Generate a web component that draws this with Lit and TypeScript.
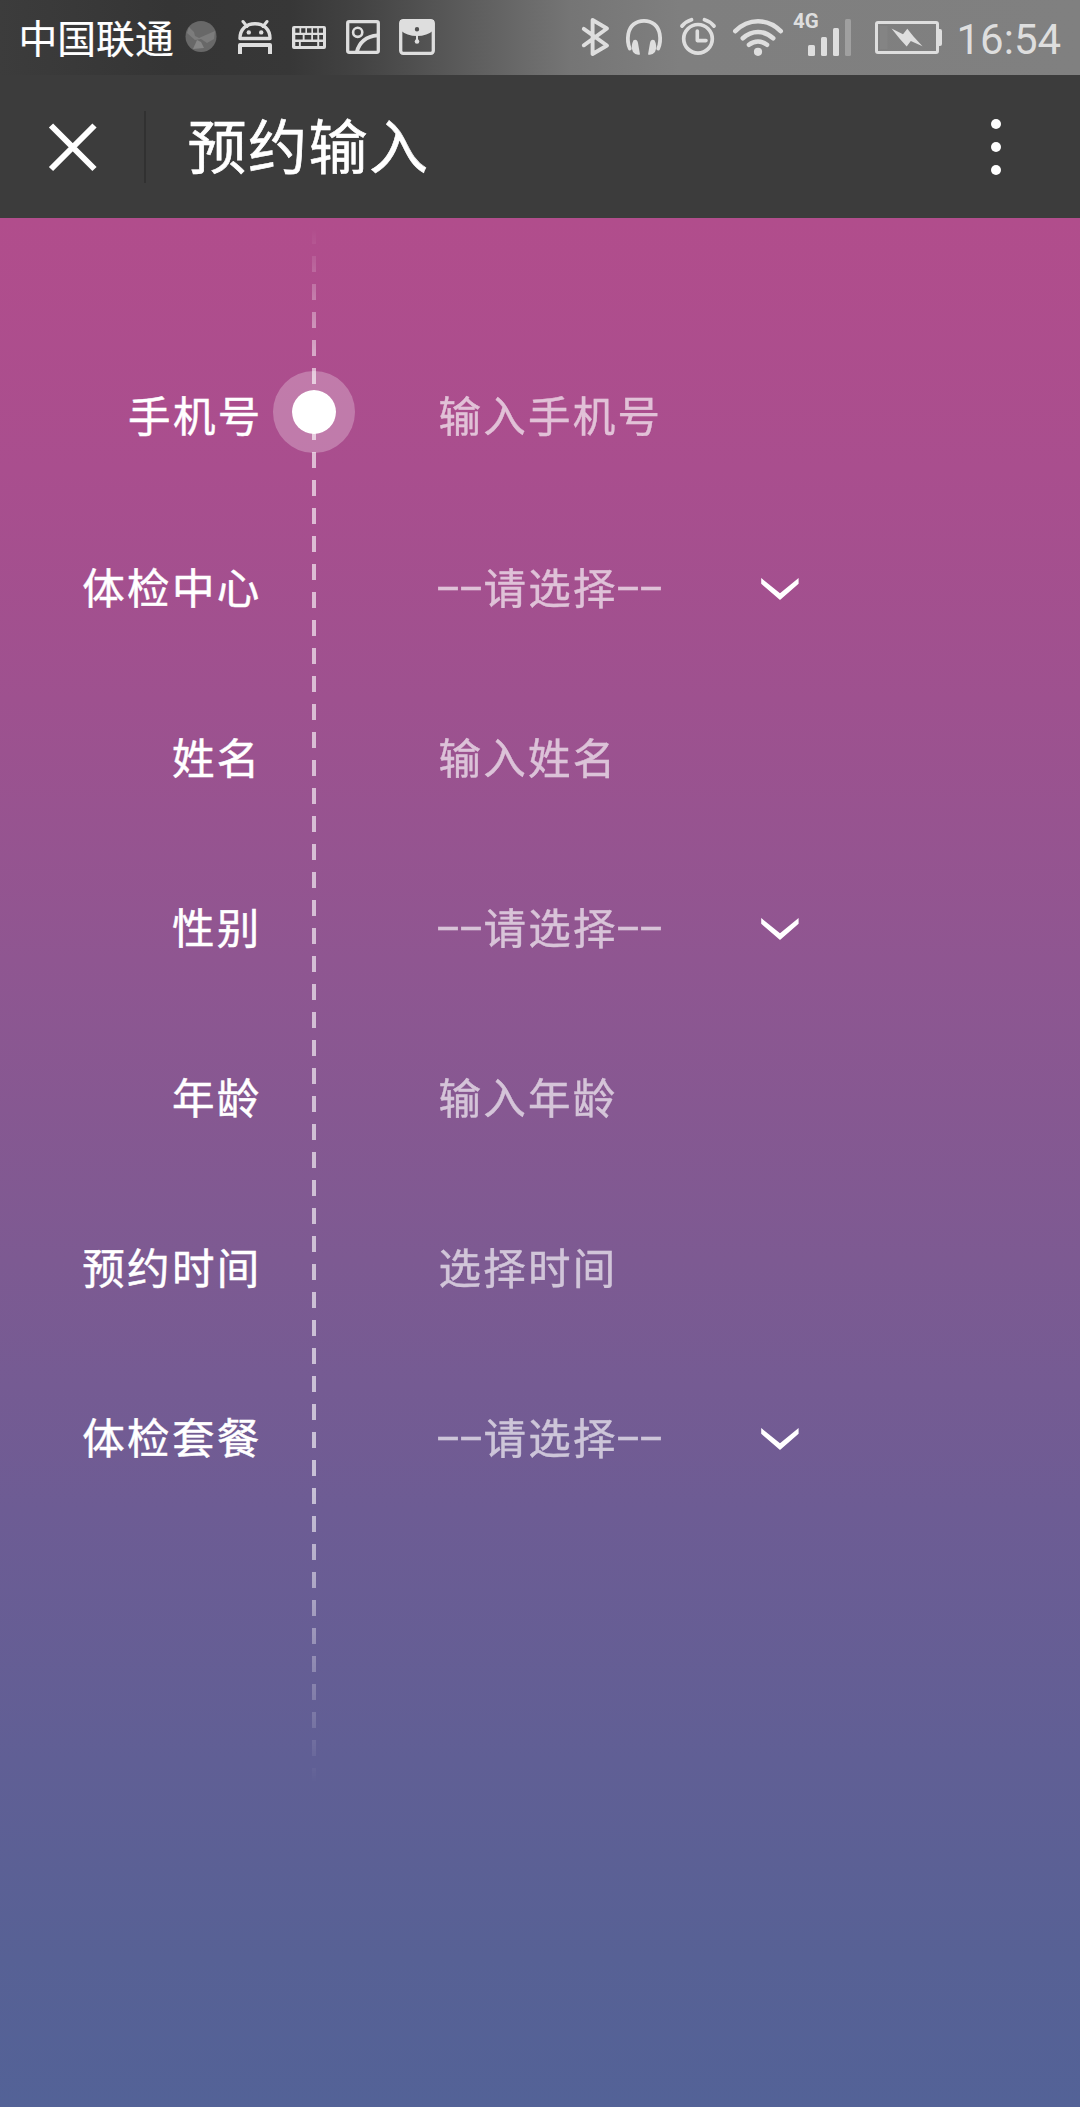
import { LitElement, html, css, svg, nothing } from "lit";
import { customElement, property } from "lit/decorators.js";

@customElement("status-bar")
class StatusBar extends LitElement {
  static styles = css`
    :host {
      display: flex;
      align-items: center;
      height: 75px;
      color: #dedede;
      background: linear-gradient(90deg, #3c3c3c 0, #353535 170px, #373737 290px, #434343 360px, #585858 450px, #757575 570px, #7f7f7f 680px, #808080 1080px);
    }
    .carrier {
      box-sizing: border-box;
      width: 174px;
      padding: 0 0 3px 18.5px;
      color: #fff;
      font: 400 38.8px/56px "Noto Sans CJK SC", sans-serif;
      white-space: nowrap;
      -webkit-text-stroke: 0.2px currentColor;
    }
    .icons {
      display: flex;
    }
    .system {
      margin-left: 130px;
    }
    svg {
      display: block;
      height: 75px;
    }
    .line {
      fill: none;
      stroke: currentColor;
      stroke-linecap: round;
      stroke-linejoin: round;
    }
    .solid {
      fill: currentColor;
    }
    .net {
      fill: currentColor;
      font: 700 20.5px Roboto, sans-serif;
    }
    .time {
      padding: 4px 0 0 5.5px;
      font: 400 42px/50px Roboto, sans-serif;
      letter-spacing: 0;
    }
  `;

  private icon(x: number, w: number, body: unknown) {
    return html`<svg width=${w} height="75" viewBox="${x} 0 ${w} 75">${body}</svg>`;
  }

  render() {
    return html`
      <span class="carrier">中国联通</span>
      <div class="icons">
        ${this.icon(174, 54, svg`
          <circle cx="201" cy="36.5" r="15.5" fill="#686868"/>
          <path d="M189 27l5 5 1 4 4 2 16-7-1 8-7 4-6-4-6 1-8-7z" fill="#7c7c7c"/>
          <path d="M197 40l-4 9 11-1-3-6z" fill="#868686"/>`)}
        ${this.icon(228, 54, svg`
          <path class="line" stroke-width="3.4" d="M240 38.5c0-9.500 6.500-14.800 15-14.800s15 5.300 15 14.800z"/>
          <path class="line" stroke-width="3" d="M243 21.500l4 5M267 21.500l-4 5"/>
          <circle class="solid" cx="248.800" cy="32.400" r="2.200"/><circle class="solid" cx="261.200" cy="32.400" r="2.200"/>
          <path class="solid" d="M238 54V45q0-2 2-2h30q2 0 2 2v9h-4v-7h-26v7z"/>`)}
        ${this.icon(282, 54, svg`
          <path class="solid" fill-rule="evenodd" d="M294 26h30q2 0 2 2v19q0 2-2 2h-30q-2 0-2-2v-19q0-2 2-2z
            M295.300 28.200v4.500h4.200v-4.500z M301.200 28.200v4.500h4.200v-4.500z M307 28.200v4.500h4.400v-4.500z M313 28.200v4.500h4.200v-4.500z M318.800 28.200v4.500h4.200v-4.500z
            M295.300 35v4.500h7.400v-4.500z M304.600 35v4.500h6.600v-4.500z M313 35v4.500h4.400v-4.500z M319.200 35v4.500h3.800v-4.500z
            M295.300 42v4h3.600v-4z M300.800 42v4h16.400v-4z M319.200 42v4h3.800v-4z"/>`)}
        ${this.icon(336, 54, svg`
          <rect class="line" stroke-width="3.300" x="347.700" y="21.700" width="30.600" height="30.600" rx="1.500"/>
          <circle class="line" stroke-width="2.600" cx="357.700" cy="32.300" r="4.600"/>
          <path class="line" stroke-width="3.800" d="M357 51.500c2-8.500 9-15.500 20.500-16.200"/>`)}
        ${this.icon(390, 54, svg`
          <rect class="line" stroke-width="3.300" x="400.700" y="20.700" width="32.600" height="32.600" rx="2.500"/>
          <path class="solid" fill-rule="evenodd" d="M400 20h34v10q-7 6-17 6t-17-6zM419.200 29.300a2.200 2.200 0 1 0-4.400 0a2.200 2.200 0 1 0 4.400 0z"/>
          <path class="line" stroke-width="2" d="M417 33v7"/><circle class="solid" cx="417" cy="41.500" r="2.300"/>`)}
      </div>
      <div class="icons system">
        ${this.icon(574, 44, svg`
          <path class="line" stroke-width="3.900" d="M583.800 28.800L607 45.500L592.600 54V20L607 28.500L583.800 45.300"/>`)}
        ${this.icon(618, 52, svg`
          <path class="line" stroke-width="3.800" stroke-linecap="butt" d="M629.800 48.500C627.300 43 627.800 37 628.300 34C629.700 25.500 636 20.800 644 20.800S658.300 25.500 659.700 34C660.200 37 660.700 43 658.200 48.500"/>
          <path class="solid" d="M633.500 40.200Q637 38.500 638 43L640 54.500Q636 55.700 633 52Q630.300 46 633.500 40.200zM654.500 40.200Q651 38.500 650 43L648 54.500Q652 55.700 655 52Q657.700 46 654.500 40.200z"/>`)}
        ${this.icon(670, 56, svg`
          <circle class="line" stroke-width="3.700" cx="698" cy="38.800" r="14.300"/>
          <path class="line" stroke-width="3.600" stroke-linecap="butt" d="M697.300 31v9.600h8.700"/>
          <path class="line" stroke-width="3.800" d="M682 26q3.500-4.500 9.500-6.300M714 26q-3.500-4.500-9.500-6.300"/>`)}
        ${this.icon(726, 63, svg`
          <path class="line" stroke-width="4.600" d="M735.300 31.200c13-13.200 32.400-13.200 45.400 0M742.800 38.300c9-8.400 21.400-8.400 30.400 0M749 44.800c5.500-4.300 12.500-4.300 18 0"/>
          <circle class="solid" cx="758" cy="51.800" r="4.100"/>`)}
        ${this.icon(789, 71, svg`
          <text class="net" x="793" y="28">4G</text>
          <rect class="solid" x="808" y="45" width="7" height="11" rx="1.500"/>
          <rect class="solid" x="821" y="37" width="6" height="19" rx="1.500"/>
          <rect class="solid" x="833" y="28" width="6" height="28" rx="1.500"/>
          <rect x="845" y="19" width="6" height="37" rx="1.500" fill="#a0a0a0"/>`)}
        ${this.icon(860, 91, svg`
          <rect x="880" y="26" width="7.500" height="23" fill="#848484"/>
          <rect class="line" stroke-width="3" x="876.500" y="22.500" width="61" height="30" rx="1.500"/>
          <path class="solid" d="M938 29h2q2 0 2 2v13q0 2-2 2h-2zM891.500 28.500L903 34.300L907.300 28.700L913.500 36.500L922.500 46.200L910.800 41L906.700 46.500L899.500 38.500z"/>`)}
      </div>
      <span class="time">16:54</span>
    `;
  }
}

@customElement("title-bar")
class TitleBar extends LitElement {
  static styles = css`
    :host {
      display: flex;
      align-items: center;
      height: 143px;
      background: #3c3c3c;
      color: #fff;
    }
    .close {
      display: block;
      width: 144px;
      height: 143px;
    }
    .divider {
      width: 2px;
      height: 72px;
      background: #313131;
    }
    .title {
      flex: 1;
      margin: 0;
      padding: 0 0 5px 41.5px;
      font: 400 59px/84px "Noto Sans CJK SC", sans-serif;
      letter-spacing: 1.5px;
      -webkit-text-stroke: 0.6px currentColor;
    }
    .more {
      display: flex;
      flex-direction: column;
      gap: 13px;
      margin-right: 79px;
    }
    .more i {
      width: 10px;
      height: 10px;
      border-radius: 50%;
      background: #fff;
    }
  `;

  render() {
    return html`
      <svg class="close" viewBox="0 0 144 143">
        <path d="M51 50.500L94.500 94M94.500 50.500L51 94" stroke="#fff" stroke-width="6"/>
      </svg>
      <span class="divider"></span>
      <h1 class="title">预约输入</h1>
      <div class="more"><i></i><i></i><i></i></div>
    `;
  }
}

@customElement("field-value")
class FieldValue extends LitElement {
  @property() text = "";
  @property({ type: Boolean }) select = false;

  static styles = css`
    :host {
      display: flex;
      align-items: center;
    }
    .value {
      display: flex;
      padding-bottom: 5px;
      color: #fff;
      opacity: 0.65;
      white-space: pre;
      -webkit-text-stroke: 0.4px currentColor;
    }
    .wide {
      width: 323px;
    }
    .dashes {
      width: 45px;
    }
    .dashes span {
      display: inline-block;
      transform: translateY(-4.5px) scaleX(1.76);
      transform-origin: 0 50%;
      letter-spacing: -1.7px;
      margin-left: -3px;
    }
    .arrow {
      display: block;
      width: 38px;
      height: 22px;
    }
  `;

  render() {
    const dashes = html`<span class="dashes"><span>--</span></span>`;
    return html`
      <span class="value ${this.select ? "wide" : ""}">${this.select ? dashes : nothing}<span>${this.text}</span>${this.select ? dashes : nothing}</span>
      ${this.select
        ? html`<svg class="arrow" viewBox="0 0 38 22"><path d="M0.200 0L19 15.300L37.600 0V5.700L19 22L0.200 5.700z" fill="#fff"/></svg>`
        : nothing}
    `;
  }
}

interface Field {
  label: string;
  text: string;
  select?: boolean;
}

const FIELDS: Field[] = [
  { label: "手机号", text: "输入手机号" },
  { label: "体检中心", text: "请选择", select: true },
  { label: "姓名", text: "输入姓名" },
  { label: "性别", text: "请选择", select: true },
  { label: "年龄", text: "输入年龄" },
  { label: "预约时间", text: "选择时间" },
  { label: "体检套餐", text: "请选择", select: true },
];

@customElement("app-root")
class AppRoot extends LitElement {
  static styles = css`
    :host {
      display: flex;
      flex-direction: column;
      width: 1080px;
      height: 2107px;
      overflow: hidden;
    }
    .form {
      flex: 1;
      display: grid;
      grid-template-columns: 261px 106px 1fr;
      align-items: start;
      background: linear-gradient(180deg, #b14d8c 0, #a94e8e 252px, #9e518f 482px, #8f5691 742px, #7d5a92 1042px, #6d5c94 1292px, #605f95 1542px, #576195 1742px, #536297 1889px);
      font: 400 42.500px/60px "Noto Sans CJK SC", sans-serif;
      letter-spacing: 2.300px;
    }
    .column {
      padding-top: 113px;
    }
    .column > * {
      height: 170px;
    }
    .column > :first-child {
      margin-bottom: 2.5px;
    }
    .label {
      box-sizing: border-box;
      display: flex;
      align-items: center;
      justify-content: flex-end;
      padding-bottom: 5px;
      margin-right: -0.5px;
      color: #fff;
      -webkit-text-stroke: 0.5px currentColor;
    }
    .column > .label:first-child {
      margin-right: -1.5px;
    }
    .values {
      padding-left: 71.4px;
    }
    .rail {
      display: grid;
      justify-items: center;
    }
    .dashes,
    .dot {
      grid-area: 1 / 1;
    }
    .dashes {
      width: 4px;
      height: 1556px;
      margin-top: 10px;
      background: repeating-linear-gradient(180deg, #fff 0 16px, transparent 16px 28px);
      mask-image: linear-gradient(180deg, transparent 0, rgba(0, 0, 0, 0.12) 35px, rgba(0, 0, 0, 0.62) 150px, rgba(0, 0, 0, 0.62) 1260px, rgba(0, 0, 0, 0.5) 1340px, transparent 1556px);
    }
    .dot {
      width: 44px;
      height: 44px;
      margin-top: 153px;
      border: 19px solid rgba(255, 255, 255, 0.26);
      border-radius: 50%;
      background: #fff;
      background-clip: padding-box;
    }
  `;

  render() {
    return html`
      <status-bar></status-bar>
      <title-bar></title-bar>
      <main class="form">
        <div class="column">
          ${FIELDS.map((f) => html`<div class="label">${f.label}</div>`)}
        </div>
        <div class="rail">
          <div class="dashes"></div>
          <div class="dot"></div>
        </div>
        <div class="column values">
          ${FIELDS.map((f) => html`<field-value .text=${f.text} .select=${!!f.select}></field-value>`)}
        </div>
      </main>
    `;
  }
}
